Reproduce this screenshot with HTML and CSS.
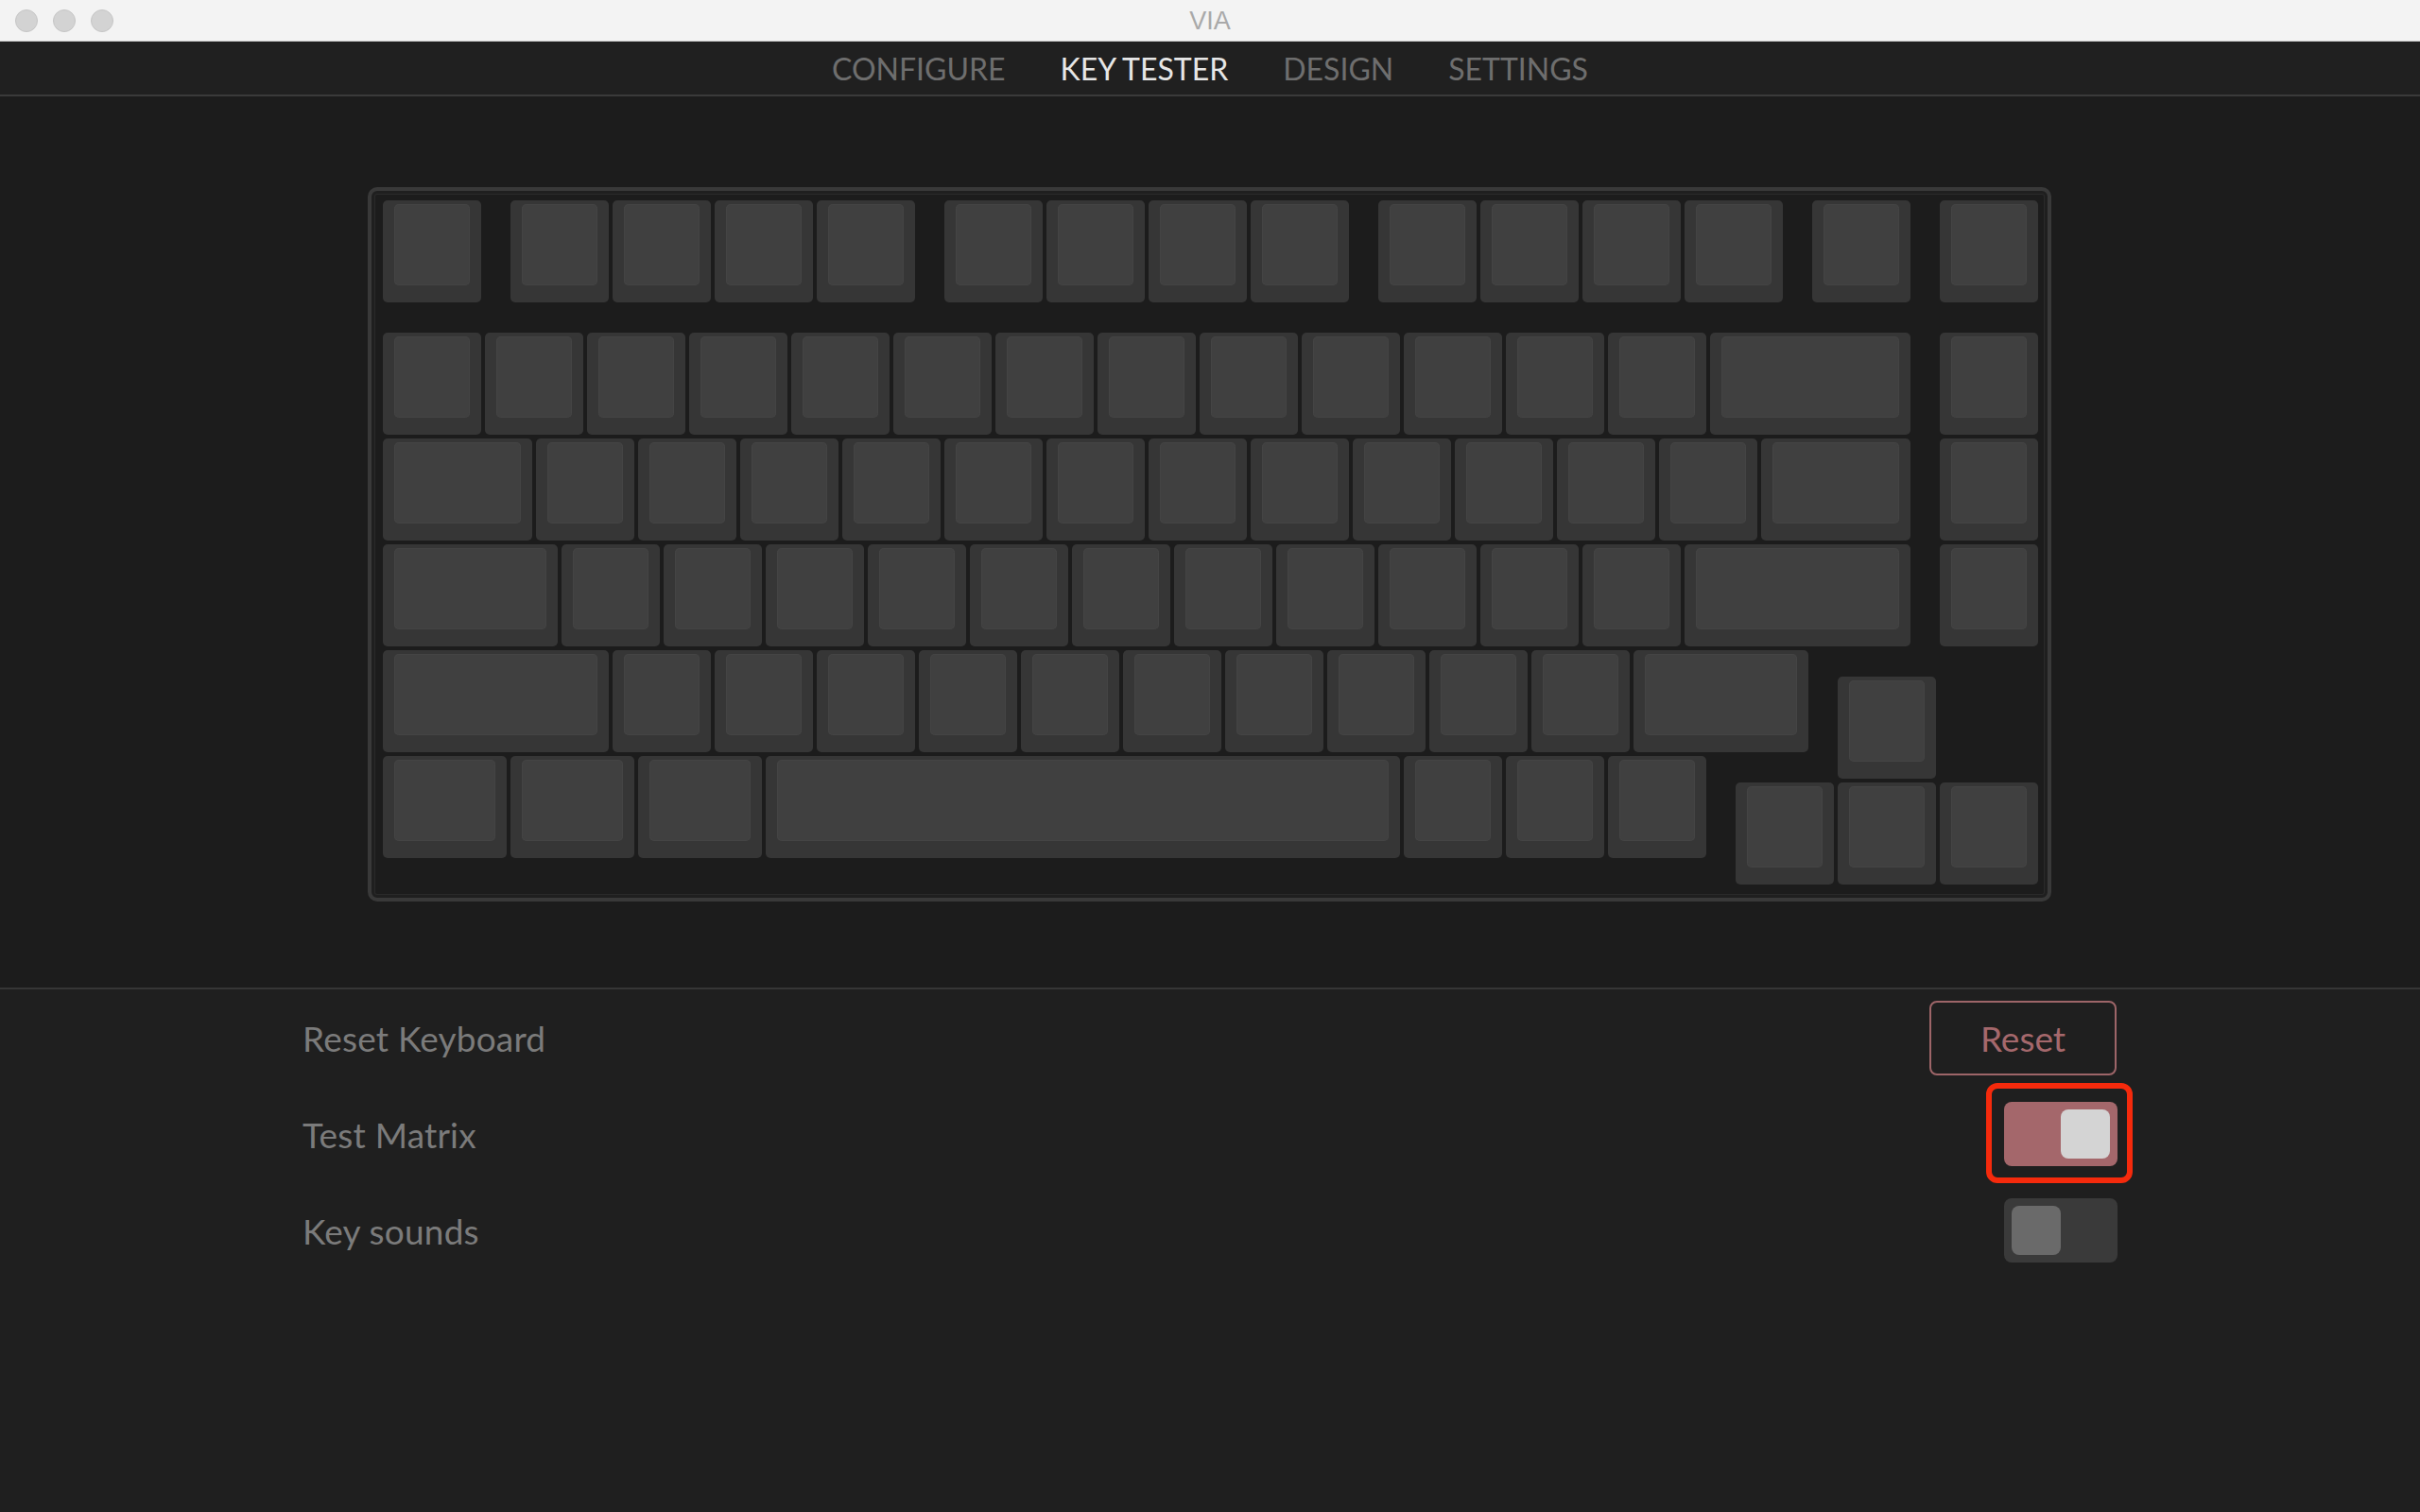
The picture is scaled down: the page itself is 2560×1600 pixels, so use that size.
FILE: index.html
```html
<!DOCTYPE html>
<html>
<head>
<meta charset="utf-8">
<title>VIA</title>
<link rel="stylesheet" href="styles.css">
</head>
<body>
<div class="window">
  <header class="titlebar">
    <div class="lights"><span></span><span></span><span></span></div>
    <div class="title">VIA</div>
  </header>
  <nav class="nav">
    <span class="tab">CONFIGURE</span>
    <span class="tab active">KEY TESTER</span>
    <span class="tab">DESIGN</span>
    <span class="tab">SETTINGS</span>
  </nav>
  <main class="stage">
    <div class="board">
      <div class="keys">
        <!-- row 0 -->
        <div class="k" style="--r:1;--c:1"></div>
        <div class="k" style="--r:1;--c:6"></div>
        <div class="k" style="--r:1;--c:10"></div>
        <div class="k" style="--r:1;--c:14"></div>
        <div class="k" style="--r:1;--c:18"></div>
        <div class="k" style="--r:1;--c:23"></div>
        <div class="k" style="--r:1;--c:27"></div>
        <div class="k" style="--r:1;--c:31"></div>
        <div class="k" style="--r:1;--c:35"></div>
        <div class="k" style="--r:1;--c:40"></div>
        <div class="k" style="--r:1;--c:44"></div>
        <div class="k" style="--r:1;--c:48"></div>
        <div class="k" style="--r:1;--c:52"></div>
        <div class="k" style="--r:1;--c:57"></div>
        <div class="k" style="--r:1;--c:62"></div>
        <!-- row 1 -->
        <div class="k" style="--r:6;--c:1"></div>
        <div class="k" style="--r:6;--c:5"></div>
        <div class="k" style="--r:6;--c:9"></div>
        <div class="k" style="--r:6;--c:13"></div>
        <div class="k" style="--r:6;--c:17"></div>
        <div class="k" style="--r:6;--c:21"></div>
        <div class="k" style="--r:6;--c:25"></div>
        <div class="k" style="--r:6;--c:29"></div>
        <div class="k" style="--r:6;--c:33"></div>
        <div class="k" style="--r:6;--c:37"></div>
        <div class="k" style="--r:6;--c:41"></div>
        <div class="k" style="--r:6;--c:45"></div>
        <div class="k" style="--r:6;--c:49"></div>
        <div class="k" style="--r:6;--c:53;--w:8"></div>
        <div class="k" style="--r:6;--c:62"></div>
        <!-- row 2 -->
        <div class="k" style="--r:10;--c:1;--w:6"></div>
        <div class="k" style="--r:10;--c:7"></div>
        <div class="k" style="--r:10;--c:11"></div>
        <div class="k" style="--r:10;--c:15"></div>
        <div class="k" style="--r:10;--c:19"></div>
        <div class="k" style="--r:10;--c:23"></div>
        <div class="k" style="--r:10;--c:27"></div>
        <div class="k" style="--r:10;--c:31"></div>
        <div class="k" style="--r:10;--c:35"></div>
        <div class="k" style="--r:10;--c:39"></div>
        <div class="k" style="--r:10;--c:43"></div>
        <div class="k" style="--r:10;--c:47"></div>
        <div class="k" style="--r:10;--c:51"></div>
        <div class="k" style="--r:10;--c:55;--w:6"></div>
        <div class="k" style="--r:10;--c:62"></div>
        <!-- row 3 -->
        <div class="k" style="--r:14;--c:1;--w:7"></div>
        <div class="k" style="--r:14;--c:8"></div>
        <div class="k" style="--r:14;--c:12"></div>
        <div class="k" style="--r:14;--c:16"></div>
        <div class="k" style="--r:14;--c:20"></div>
        <div class="k" style="--r:14;--c:24"></div>
        <div class="k" style="--r:14;--c:28"></div>
        <div class="k" style="--r:14;--c:32"></div>
        <div class="k" style="--r:14;--c:36"></div>
        <div class="k" style="--r:14;--c:40"></div>
        <div class="k" style="--r:14;--c:44"></div>
        <div class="k" style="--r:14;--c:48"></div>
        <div class="k" style="--r:14;--c:52;--w:9"></div>
        <div class="k" style="--r:14;--c:62"></div>
        <!-- row 4 -->
        <div class="k" style="--r:18;--c:1;--w:9"></div>
        <div class="k" style="--r:18;--c:10"></div>
        <div class="k" style="--r:18;--c:14"></div>
        <div class="k" style="--r:18;--c:18"></div>
        <div class="k" style="--r:18;--c:22"></div>
        <div class="k" style="--r:18;--c:26"></div>
        <div class="k" style="--r:18;--c:30"></div>
        <div class="k" style="--r:18;--c:34"></div>
        <div class="k" style="--r:18;--c:38"></div>
        <div class="k" style="--r:18;--c:42"></div>
        <div class="k" style="--r:18;--c:46"></div>
        <div class="k" style="--r:18;--c:50;--w:7"></div>
        <div class="k" style="--r:19;--c:58"></div>
        <!-- row 5 -->
        <div class="k" style="--r:22;--c:1;--w:5"></div>
        <div class="k" style="--r:22;--c:6;--w:5"></div>
        <div class="k" style="--r:22;--c:11;--w:5"></div>
        <div class="k" style="--r:22;--c:16;--w:25"></div>
        <div class="k" style="--r:22;--c:41"></div>
        <div class="k" style="--r:22;--c:45"></div>
        <div class="k" style="--r:22;--c:49"></div>
        <div class="k" style="--r:23;--c:54"></div>
        <div class="k" style="--r:23;--c:58"></div>
        <div class="k" style="--r:23;--c:62"></div>
      </div>
    </div>
  </main>
  <section class="settings">
    <div class="row">
      <span class="label">Reset Keyboard</span>
      <button class="btn">Reset</button>
    </div>
    <div class="row">
      <span class="label">Test Matrix</span>
      <span class="toggle on"><span class="knob"></span><span class="mark"></span></span>
    </div>
    <div class="row">
      <span class="label">Key sounds</span>
      <span class="toggle"><span class="knob"></span></span>
    </div>
  </section>
</div>
</body>
</html>
```
FILE: styles.css
```css
html, body {
  margin: 0;
  padding: 0;
  background: #1f1f1f;
}
body {
  width: 2560px;
  height: 1600px;
  overflow: hidden;
  font-family: Lato, "Noto Sans", sans-serif;
}
.window {
  display: flex;
  flex-direction: column;
  height: 1600px;
  background: #1f1f1f;
}
.titlebar {
  height: 43px;
  background: #f3f3f3;
  border-bottom: 1px solid #cbcbcb;
  display: flex;
  align-items: center;
  justify-content: center;
  position: relative;
}
.lights {
  position: absolute;
  left: 16px;
  top: 10px;
  display: flex;
  gap: 16px;
}
.lights span {
  width: 22px;
  height: 22px;
  border-radius: 50%;
  background: #d3d3d3;
  border: 1px solid #c6c6c6;
}
.title {
  font-family: "Liberation Sans", Arial, sans-serif;
  font-size: 27px;
  color: #a9a9a9;
  padding-top: 2px;
}
.nav {
  height: 56px;
  background: #202020;
  border-bottom: 2px solid #3a3a3a;
  display: flex;
  justify-content: center;
  align-items: center;
  gap: 58px;
}
.tab {
  font-size: 32px;
  color: #6e6e6e;
}
.tab.active {
  color: #e6e6e6;
}
.stage {
  height: 945px;
  box-sizing: border-box;
  padding-top: 96px;
  background: #1c1c1c;
  border-bottom: 2px solid #363636;
  display: flex;
  justify-content: center;
  align-items: flex-start;
}
.board {
  border: 4px solid #393939;
  border-radius: 10px;
  padding: 10px 6px 10px 12px;
  margin-right: 2px;
  box-shadow: inset 0 0 0 3px #1f1f1f, inset 0 0 0 4px #2a2a2a;
}
.keys {
  display: grid;
  grid-template-columns: repeat(65, 27px);
  grid-template-rows: repeat(26, 28px);
}
.k {
  --w: 4;
  grid-column: var(--c) / span var(--w);
  grid-row: var(--r) / span 4;
  margin: 0 4px 4px 0;
  background: #363636;
  border-radius: 5px;
  padding: 4px 12px 18px;
  display: flex;
}
.k::before {
  content: "";
  flex: 1;
  background: #404040;
  border-radius: 5px;
  box-shadow: inset 0 0 0 1px #444444;
}
.settings {
  width: 1920px;
  margin: 0 auto;
  display: flex;
  flex-direction: column;
}
.row {
  height: 102px;
  display: flex;
  justify-content: space-between;
  align-items: center;
}
.label {
  font-size: 37px;
  letter-spacing: 0.2px;
  color: #7b7b7b;
}
.btn {
  width: 198px;
  height: 79px;
  box-sizing: border-box;
  border: 2px solid #9d6568;
  border-radius: 8px;
  background: transparent;
  color: #a5686c;
  font-family: Lato, "Noto Sans", sans-serif;
  font-size: 37px;
  padding: 0 0 0 0;
  margin-right: 1px;
}
.toggle {
  width: 120px;
  height: 68px;
  box-sizing: border-box;
  padding: 8px;
  border-radius: 8px;
  background: #3a3a3a;
  display: flex;
  justify-content: flex-start;
  position: relative;
}
.toggle .knob {
  width: 52px;
  height: 52px;
  border-radius: 8px;
  background: #6a6a6a;
}
.toggle.on {
  background: #a4676b;
  justify-content: flex-end;
}
.toggle.on .knob {
  background: #d4d4d4;
}
.mark {
  position: absolute;
  left: -19px;
  top: -20px;
  right: -16px;
  bottom: -18px;
  border: 6px solid #f52a0c;
  border-radius: 12px;
}
```
